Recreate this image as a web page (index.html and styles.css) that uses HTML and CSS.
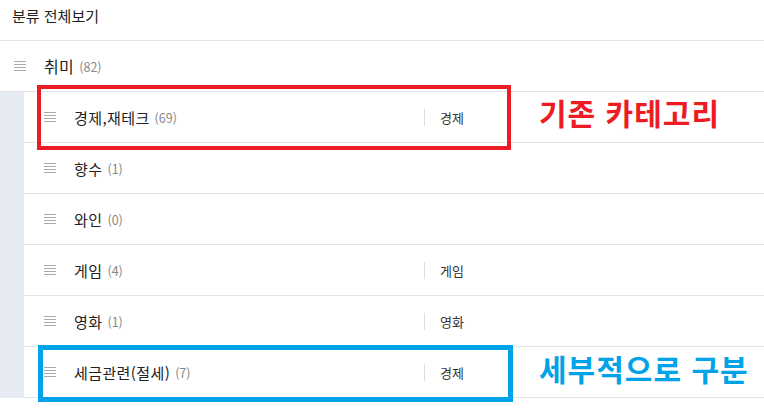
FILE: index.html
```html
<!DOCTYPE html>
<html lang="ko">
<head>
<meta charset="utf-8">
<link rel="stylesheet" href="styles.css">
</head>
<body>
<div class="page">
  <div class="header">분류 전체보기</div>
  <div class="row top-row">
    <span class="handle"><i></i><i></i><i></i><i></i></span>
    <span class="name">취미</span><span class="count">(82)</span>
  </div>
  <div class="sublist">
    <div class="row sub-row">
      <div class="main"><span class="handle"><i></i><i></i><i></i><i></i></span><span class="name">경제,재테크</span><span class="count">(69)</span></div>
      <div class="tag">경제</div>
    </div>
    <div class="row sub-row">
      <div class="main"><span class="handle"><i></i><i></i><i></i><i></i></span><span class="name">향수</span><span class="count">(1)</span></div>
    </div>
    <div class="row sub-row">
      <div class="main"><span class="handle"><i></i><i></i><i></i><i></i></span><span class="name">와인</span><span class="count">(0)</span></div>
    </div>
    <div class="row sub-row">
      <div class="main"><span class="handle"><i></i><i></i><i></i><i></i></span><span class="name">게임</span><span class="count">(4)</span></div>
      <div class="tag">게임</div>
    </div>
    <div class="row sub-row">
      <div class="main"><span class="handle"><i></i><i></i><i></i><i></i></span><span class="name">영화</span><span class="count">(1)</span></div>
      <div class="tag">영화</div>
    </div>
    <div class="row sub-row">
      <div class="main"><span class="handle"><i></i><i></i><i></i><i></i></span><span class="name">세금관련(절세)</span><span class="count">(7)</span></div>
      <div class="tag">경제</div>
    </div>
  </div>

  <div class="box box-red"></div>
  <div class="note note-red">기존 카테고리</div>
  <div class="box box-blue"></div>
  <div class="note note-blue">세부적으로 구분</div>
</div>
</body>
</html>
```
FILE: styles.css
```css
html, body {
  margin: 0;
  padding: 0;
  background: #fff;
}
body {
  font-family: "Noto Sans CJK KR", "Noto Sans", sans-serif;
  color: #333;
}
.page {
  position: relative;
  width: 764px;
  height: 409px;
  overflow: hidden;
}
.header {
  height: 40px;
  line-height: 32px;
  padding-left: 12px;
  font-size: 15px;
  color: #222;
  border-bottom: 1px solid #e3e4ea;
}
.row {
  display: flex;
  align-items: center;
  height: 50px;
  border-bottom: 1px solid #e3e4ea;
  background: #fff;
}
.top-row {
  padding-left: 14px;
}
.top-row .handle {
  margin-right: 18px;
}
.top-row .name {
  font-size: 16px;
  color: #222;
}
.handle {
  display: flex;
  flex-direction: column;
  gap: 2px;
  width: 12px;
}
.handle i {
  display: block;
  height: 1px;
  background: #aaa;
}
.name {
  font-size: 15px;
  letter-spacing: 0.4px;
  color: #222;
}
.count {
  font-size: 12.5px;
  color: #888;
  margin-left: 5px;
}
.sublist {
  background: #e6eaf2;
  padding-left: 24px;
}
.main {
  width: 380px;
  padding-left: 20px;
  display: flex;
  align-items: center;
}
.main .handle {
  margin-right: 18px;
}
.tag {
  border-left: 1px solid #dcdde3;
  height: 17px;
  line-height: 17px;
  padding-left: 15px;
  font-size: 13px;
  color: #333;
}
.box {
  position: absolute;
  box-sizing: border-box;
}
.box-red {
  left: 37px;
  top: 85px;
  width: 474px;
  height: 65px;
  border: 4px solid #ed1c24;
}
.box-blue {
  left: 38px;
  top: 345px;
  width: 475px;
  height: 57px;
  border: 5px solid #00a2e8;
}
.note {
  position: absolute;
  font-size: 30px;
  font-weight: 700;
  letter-spacing: 1px;
  line-height: 1;
  white-space: nowrap;
}
.note-red {
  left: 539px;
  top: 97px;
  color: #ed1c24;
}
.note-blue {
  left: 539px;
  top: 353px;
  color: #00a2e8;
}
```
